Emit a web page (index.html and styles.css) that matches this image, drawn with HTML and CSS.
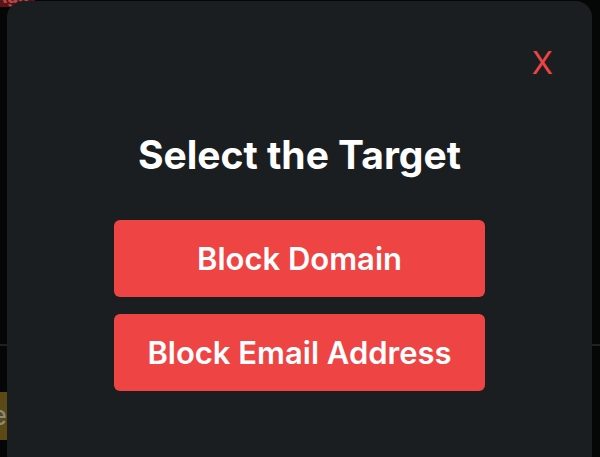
FILE: index.html
```html
<!DOCTYPE html>
<html>
  <head>
    <title>Select the Target</title>
    <meta charset="UTF-8" />
    <link rel="stylesheet" href="styles.css">
  </head>

  <body>
    <div class="page">
      <div class="page_badge">Aga</div>
      <div class="page_rule"></div>
      <div class="page_chip">e</div>
    </div>

    <div class="modal">
      <div class="modal_head">
        <button class="close_btn">X</button>
      </div>
      <div class="modal_title">Select the Target</div>
      <div class="modal_actions">
        <button class="target_btn">Block Domain</button>
        <button class="target_btn">Block Email Address</button>
      </div>
    </div>
  </body>
</html>
```

FILE: styles.css
```css
body {
  margin: 0;
  height: 457px;
  overflow: hidden;
  background: #050606;
  font-family: "Inter", sans-serif;
}

.page {
  height: 100%;
}

.page_badge {
  position: absolute;
  top: -14px;
  left: -12px;
  padding: 0 6px;
  background: #5a1214;
  color: #b04a4a;
  font-size: 18px;
  font-weight: 700;
  border-radius: 4px;
}

.page_rule {
  position: absolute;
  top: 344px;
  left: 0;
  right: 0;
  height: 2px;
  background: #1e2022;
}

.page_chip {
  position: absolute;
  top: 392px;
  left: -12px;
  width: 19px;
  height: 48px;
  background: #5b4a16;
  color: #8a8a80;
  font-size: 26px;
  line-height: 48px;
  text-align: right;
}

.modal {
  position: absolute;
  top: 1px;
  left: 7px;
  width: 585px;
  height: 470px;
  background: #1b1e21;
  border-radius: 16px;
  display: flex;
  flex-direction: column;
  align-items: center;
}

.modal_head {
  align-self: stretch;
  display: flex;
  justify-content: flex-end;
  padding: 43px 39px 0 0;
}

.close_btn {
  background: none;
  border: none;
  padding: 0;
  color: #ef4444;
  font-family: "Inter", sans-serif;
  font-size: 31px;
  font-weight: 400;
  line-height: 38px;
  cursor: pointer;
}

.modal_title {
  margin-top: 49px;
  color: #ffffff;
  font-size: 39px;
  font-weight: 700;
  line-height: 48px;
}

.modal_actions {
  margin-top: 41px;
  display: flex;
  flex-direction: column;
  gap: 17px;
}

.target_btn {
  width: 371px;
  height: 77px;
  border: none;
  border-radius: 6px;
  background: #ef4444;
  color: #ffffff;
  font-family: "Inter", sans-serif;
  font-size: 31px;
  font-weight: 600;
  cursor: pointer;
}
```
